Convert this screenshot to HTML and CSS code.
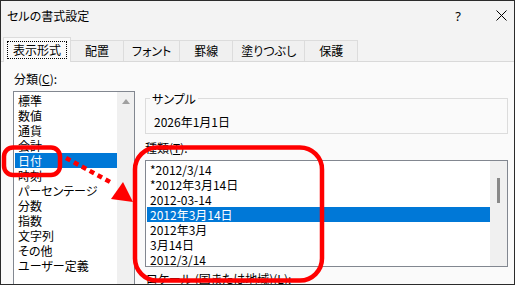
FILE: index.html
```html
<!DOCTYPE html>
<html>
<head>
    <meta charset="utf-8">
    <title>セルの書式設定</title>
    <link rel="stylesheet" href="styles.css">
</head>
<body>
    <div class="dialog">
        <div class="titlebar">
            <span class="title">セルの書式設定</span>
            <span class="help">?</span>
            <span class="close">
                <svg width="11" height="11" viewBox="0 0 11 11">
                    <path d="M0.5 0.5 L10.5 10.5 M10.5 0.5 L0.5 10.5" stroke="#000" stroke-width="1" fill="none"/>
                </svg>
            </span>
        </div>

        <div class="tabs">
            <div class="tab active"><span class="focus">表示形式</span></div>
            <div class="tab">配置</div>
            <div class="tab">フォント</div>
            <div class="tab">罫線</div>
            <div class="tab">塗りつぶし</div>
            <div class="tab">保護</div>
        </div>

        <div class="panel">
            <!-- category list -->
            <div class="category">
                <div class="label">分類(<u>C</u>):</div>
                <div class="listbox category-list">
                    <ul class="items">
                        <li>標準</li>
                        <li>数値</li>
                        <li>通貨</li>
                        <li>会計</li>
                        <li class="selected">日付</li>
                        <li>時刻</li>
                        <li>パーセンテージ</li>
                        <li>分数</li>
                        <li>指数</li>
                        <li>文字列</li>
                        <li>その他</li>
                        <li>ユーザー定義</li>
                    </ul>
                    <div class="vscroll"><span class="arrow-up"></span></div>
                </div>
            </div>

            <!-- sample + type list -->
            <div class="detail">
                <fieldset class="sample">
                    <legend>サンプル</legend>
                    <div class="sample-value">2026年1月1日</div>
                </fieldset>

                <div class="label type-label">種類(<u>T</u>):</div>
                <div class="listbox type-list">
                    <ul class="items">
                        <li>*2012/3/14</li>
                        <li>*2012年3月14日</li>
                        <li>2012-03-14</li>
                        <li class="selected">2012年3月14日</li>
                        <li>2012年3月</li>
                        <li>3月14日</li>
                        <li>2012/3/14</li>
                    </ul>
                    <div class="vscroll"><span class="thumb"></span></div>
                </div>

                <div class="label locale">ロケール (国または地域)(<u>L</u>):</div>
            </div>
        </div>

        <!-- red annotation marks -->
        <svg class="marks" width="515" height="285" viewBox="0 0 515 285">
            <rect x="4" y="147.5" width="56" height="27.5" rx="9" fill="none" stroke="#ff0000" stroke-width="4.5"/>
            <rect x="135" y="147.5" width="187" height="133" rx="22" fill="none" stroke="#ff0000" stroke-width="4.5"/>
            <line x1="66" y1="158" x2="112" y2="183" stroke="#ff0000" stroke-width="4.5" stroke-dasharray="5 4"/>
            <polygon points="111,199 123,182 133,202" fill="#ff0000"/>
        </svg>
    </div>
</body>
</html>
```

FILE: styles.css
```css
/* Page */
body {
    margin: 0;
    padding: 0;
    background-color: #fafafa;
}

/* Dialog frame */
.dialog {
    position: relative;
    width: 515px;
    height: 285px;
    box-sizing: border-box;
    border: 1px solid #2b2b2b;
    overflow: hidden;
    background-color: #fafafa;
    font-family: "Noto Sans CJK JP", "Noto Sans", sans-serif;
    font-size: 12px;
    font-feature-settings: "palt";
    color: #000;
}

/* Title bar */
.titlebar {
    display: flex;
    align-items: center;
    height: 29px;
    padding-left: 6px;
    padding-right: 7px;
    background-color: #f3f3f3;
}

.title {
    flex: 1;
}

.help {
    font-family: "Noto Sans", sans-serif;
    font-size: 13px;
    margin-right: 35px;
}

.close svg {
    display: block;
}

/* Tabs */
.tabs {
    display: flex;
    align-items: flex-end;
    height: 24px;
    padding-top: 7px;
    padding-left: 2px;
    background-color: #f3f3f3;
    border-bottom: 1px solid #d9d9d9;
}

.tab {
    box-sizing: border-box;
    height: 21px;
    min-width: 53px;
    padding: 0 8px;
    line-height: 20px;
    text-align: center;
    border-top: 1px solid #dcdcdc;
    border-right: 1px solid #dcdcdc;
    background-color: #f0f0f0;
}

.tab.active {
    height: 25px;
    margin-bottom: -1px;
    padding: 4px 4px 0 4px;
    border-left: 1px solid #dcdcdc;
    background-color: #fafafa;
    line-height: 14px;
}

.focus {
    display: block;
    width: 58px;
    padding: 1px 0;
    outline: 1px dotted #000;
    text-align: center;
}

/* Panel content */
.panel {
    display: flex;
    gap: 10px;
    padding: 9px 6px 0 12px;
}

.label {
    line-height: 15px;
    padding-left: 1px;
}

.category {
    width: 122px;
}

.detail {
    flex: 1;
    margin-top: 20px;
}

/* List boxes */
.listbox {
    display: flex;
    border: 1px solid #828790;
    background-color: #fff;
}

.items {
    flex: 1;
    list-style: none;
    margin: 0;
    padding: 1px 0 0 0;
}

.items li {
    line-height: 15px;
    height: 15px;
    white-space: nowrap;
}

.items li.selected {
    background-color: #0078d7;
    color: #fff;
}

.vscroll {
    width: 17px;
    background-color: #f0f0f0;
    display: flex;
    flex-direction: column;
    align-items: center;
}

.category-list {
    margin-top: 5px;
    height: 200px;
}

.category-list .items li {
    margin-left: 1px;
    padding-left: 3px;
}

.arrow-up {
    margin-top: 7px;
    width: 0;
    height: 0;
    border-left: 4px solid transparent;
    border-right: 4px solid transparent;
    border-bottom: 5px solid #a0a0a0;
}

.type-list {
    height: 105px;
    margin-top: 5px;
}

.type-list .items li {
    margin-left: 1px;
    padding-left: 3px;
}

.thumb {
    display: block;
    width: 3px;
    height: 25px;
    margin-top: 17px;
    background-color: #8a8a8a;
}

/* Sample box */
.sample {
    margin: 0;
    padding: 8px 8px 4px 8px;
    border: 1px solid #dcdcdc;
}

.sample legend {
    margin-left: -4px;
    padding: 0 2px;
    line-height: 15px;
}

.sample-value {
    line-height: 15px;
}

.type-label {
    margin-top: 6px;
    padding-left: 0;
}

.locale {
    margin-top: 4px;
}

/* Red annotations drawn over the dialog */
.marks {
    position: absolute;
    top: -1px;
    left: -1px;
}
```
